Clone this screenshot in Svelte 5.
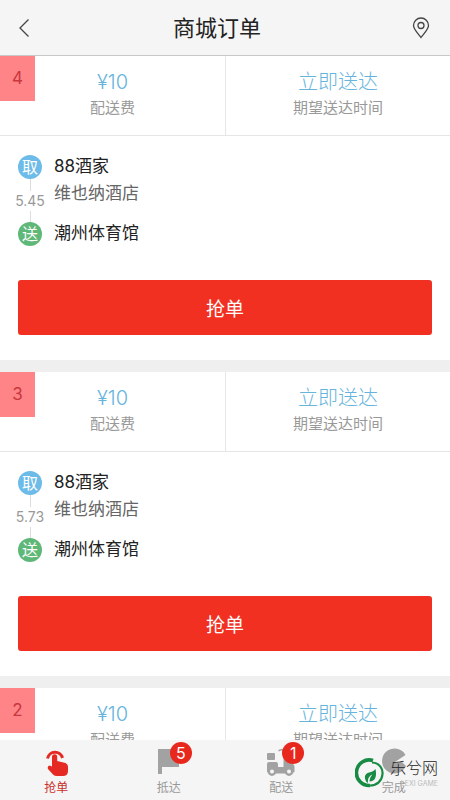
<script lang="ts">
	type Order = { no: number, fee: number, distance: string }

	const orders: Order[] = [
		{ no: 4, fee: 10, distance: '5.45' },
		{ no: 3, fee: 10, distance: '5.73' },
		{ no: 2, fee: 10, distance: '5.80' },
	]

	const tabs = [
		{ id: 'grab', label: '抢单', count: 0 },
		{ id: 'arrive', label: '抵达', count: 5 },
		{ id: 'deliver', label: '配送', count: 1 },
		{ id: 'done', label: '完成', count: 0 },
	]

	let active = $state('grab')
</script>

<svelte:head>
	<title>商城订单</title>
</svelte:head>

<div class="screen">
	<header>
		<button class="icon" aria-label="返回">
			<svg width="12" height="20" viewBox="0 0 12 20">
				<path d="M10.5 1.5 L2 10 L10.5 18.5" />
			</svg>
		</button>
		<h1>商城订单</h1>
		<button class="icon pin" aria-label="位置">
			<svg width="18" height="22" viewBox="0 0 18 22">
				<path d="M9 20.5 C7 17.5 1.5 12.5 1.5 8.5 A7.5 7.5 0 0 1 16.5 8.5 C16.5 12.5 11 17.5 9 20.5 Z" />
				<circle cx="9" cy="8.5" r="3" />
			</svg>
		</button>
	</header>

	<main>
		{#each orders as order (order.no)}
			<article>
				<div class="summary">
					<span class="number">{order.no}</span>
					<div class="cell">
						<strong>¥{order.fee}</strong>
						<span>配送费</span>
					</div>
					<div class="cell">
						<strong>立即送达</strong>
						<span>期望送达时间</span>
					</div>
				</div>
				<div class="route">
					<div class="track">
						<span class="dot pick">取</span>
						<span class="distance">{order.distance}</span>
						<span class="dot drop">送</span>
					</div>
					<div class="places">
						<p>88酒家</p>
						<p class="detail">维也纳酒店</p>
						<p class="target">潮州体育馆</p>
					</div>
				</div>
				<button class="take">抢单</button>
			</article>
		{/each}
	</main>

	<nav>
		{#each tabs as tab (tab.id)}
			<button class="tab" class:active={active === tab.id} onclick={() => { active = tab.id }}>
				<span class="glyph">
					<svg width="30" height="30" viewBox="0 0 30 30">
						{#if tab.id === 'grab'}
							<path class="line" d="M6.5 11.5 A7.7 7.7 0 0 1 21.5 11" />
							<path d="M11 9.800 a2.600 2.600 0 0 1 5.200 0 V14 L24.500 16 Q27 17 27 19.500 V24.500 Q26.500 29 22 29 H16 Q13.500 29 12 27.500 L7 22 Q6 19 8.500 18.500 L11 19.500 Z" />
						{:else if tab.id === 'arrive'}
							<path d="M4 2 H21 V8 H25 V20 H8 V27 H4 Z" />
						{:else if tab.id === 'deliver'}
							<rect x="1" y="6" width="8" height="7" rx="1" />
							<path d="M1 25 V17 Q1 15 3 15 H10 Q12 15 12 17 V20 H17.5 V7 L20 3.5 H23 V15 Q28.5 16.5 28.500 20 V25 L23 26.5 H6 Z" />
							<path class="line thin" d="M12.5 4 Q15 2 18.5 3.5" />
							<circle class="wheel" cx="6" cy="24.5" r="3.2" />
							<circle class="wheel" cx="23" cy="24.5" r="3.2" />
						{:else}
							<path d="M16 15 L26.5 8 A12.5 12.500 0 1 0 27 19 L23 15 Z" />
						{/if}
					</svg>
					{#if tab.count}
						<span class="badge">{tab.count}</span>
					{/if}
				</span>
				<span class="label">{tab.label}</span>
			</button>
		{/each}
		<div class="brand">
			<svg width="30" height="30" viewBox="0 0 30 30">
				<path class="hoop" d="M18 2.500 A12.800 12.800 0 1 0 15 27.500" />
				<path class="hoop slim" d="M17 4.500 C25 5 28 11 27.500 16 C27 23 22 27.500 15 27.500" />
				<path d="M11.500 24 C8.500 19 10 15.500 14 14.500 C17 14 19 13 20.500 11 C22 18 20.500 23.500 14.500 23.500 C14.500 20.500 15.500 18.500 17.500 16.500 C14 18 12.500 20.500 13 25 Z" />
			</svg>
			<div class="words">
				<b>乐兮网</b>
				<small>LEXI GAME</small>
			</div>
		</div>
	</nav>
</div>

<style>
	:global(body) {
		background: #fff;
		font-family: Inter, "Noto Sans CJK SC", sans-serif;
	}

	.screen {
		display: flex;
		flex-direction: column;
		height: 100vh;
	}

	button {
		border: 0;
		padding: 0;
		background: none;
		font: inherit;
		cursor: pointer;
	}

	header {
		flex: none;
		display: flex;
		align-items: center;
		justify-content: space-between;
		height: 55px;
		padding: 0 12px;
		background: #f5f5f5;
		border-bottom: 1px solid #c8c8c8;
	}

	h1 {
		margin: 0;
		font-size: 22px;
		line-height: 32px;
		font-weight: 400;
		color: #222;
	}

	.icon {
		display: grid;
		place-items: center;
		width: 24px;
		height: 40px;

		& svg {
			fill: none;
			stroke: #444;
			stroke-width: 1.3;
		}
	}

	.pin {
		width: 40px;
		padding-left: 6px;
	}

	main {
		flex: 1;
		min-height: 0;
		overflow-y: auto;
		scrollbar-width: none;
		background: #efefef;
	}

	article {
		margin-bottom: 12px;
		padding-bottom: 25px;
		background: #fff;
	}

	.summary {
		position: relative;
		display: grid;
		grid-template-columns: 1fr 1fr;
		height: 79px;
		border-bottom: 1px solid #e6e6e6;
	}

	.number {
		position: absolute;
		top: 0;
		left: 0;
		width: 35px;
		line-height: 45px;
		background: #ff8488;
		color: #c9373c;
		font-size: 17px;
		text-align: center;
	}

	.cell {
		display: flex;
		flex-direction: column;
		align-items: center;
		padding-top: 12px;

		& strong {
			font-size: 20px;
			line-height: 28px;
			font-weight: 300;
			color: #66b4dc;
		}

		& span {
			font-size: 15px;
			line-height: 23px;
			color: #999;
		}
	}

	.cell + .cell {
		border-left: 1px solid #e6e6e6;
	}

	.route {
		display: flex;
		gap: 9px;
		padding: 16px 15px 32px;
	}

	.track {
		display: flex;
		flex-direction: column;
		justify-content: space-between;
		align-items: center;
		width: 30px;
		height: 96px;
		padding: 3px 0 2px;
		box-sizing: border-box;
		background: linear-gradient(#ddd, #ddd) center / 1px 60px no-repeat;
	}

	.dot {
		width: 24px;
		height: 24px;
		border-radius: 50%;
		color: #fff;
		font-size: 16px;
		line-height: 24px;
		text-align: center;
	}

	.pick {
		background: #6dbbe8;
	}

	.drop {
		background: #5fb878;
	}

	.distance {
		background: #fff;
		font-size: 14px;
		line-height: 20px;
		color: #999;
	}

	.places {
		padding-top: 1px;
	}

	.places p {
		margin: 0;
		font-size: 17px;
		line-height: 27px;
		color: #222;
	}

	.places .detail {
		color: #666;
	}

	.places .target {
		margin-top: 13px;
	}

	.take {
		display: block;
		width: calc(100% - 36px);
		height: 55px;
		margin: 0 18px;
		border-radius: 3px;
		background: #f23022;
		color: #fff;
		font-size: 19px;
	}

	nav {
		position: relative;
		flex: none;
		display: grid;
		grid-template-columns: repeat(4, 1fr);
		height: 60px;
		background: #f5f5f5;
	}

	.tab {
		display: flex;
		flex-direction: column;
		align-items: center;
		gap: 1px;
		padding-top: 7px;
		color: #999;

		& svg {
			display: block;
			fill: #a2a2a2;
			stroke: none;
		}

		& .line {
			fill: none;
			stroke: #a2a2a2;
			stroke-width: 3;
		}

		& .thin {
			stroke-width: 1.5;
		}

		& .wheel {
			fill: #f5f5f5;
			stroke: #a2a2a2;
			stroke-width: 2.4;
		}
	}

	.tab.active {
		color: #c9302c;

		& svg {
			fill: #e42a22;
		}

		& .line,
		& .wheel {
			stroke: #e42a22;
		}
	}

	.glyph {
		position: relative;
	}

	.label {
		font-size: 12px;
		line-height: 20px;
	}

	.badge {
		position: absolute;
		top: -5px;
		right: -8px;
		width: 22px;
		border-radius: 50%;
		background: #e8271d;
		color: #fff;
		font-size: 16px;
		line-height: 22px;
		text-align: center;
	}

	.brand {
		position: absolute;
		right: 12px;
		bottom: 11px;
		display: flex;
		align-items: center;
		gap: 5px;
		pointer-events: none;

		& svg {
			fill: #178b43;
		}

		& .hoop {
			fill: none;
			stroke: #178b43;
			stroke-width: 3.6;
		}

		& .slim {
			stroke-width: 2.2;
		}
	}

	.words {
		display: flex;
		flex-direction: column;
		color: #222;

		& b {
			font-size: 16px;
			line-height: 22px;
			font-weight: 300;
		}

		& small {
			font-size: 7px;
			line-height: 10px;
			text-align: right;
			color: #bbb;
		}
	}
</style>
